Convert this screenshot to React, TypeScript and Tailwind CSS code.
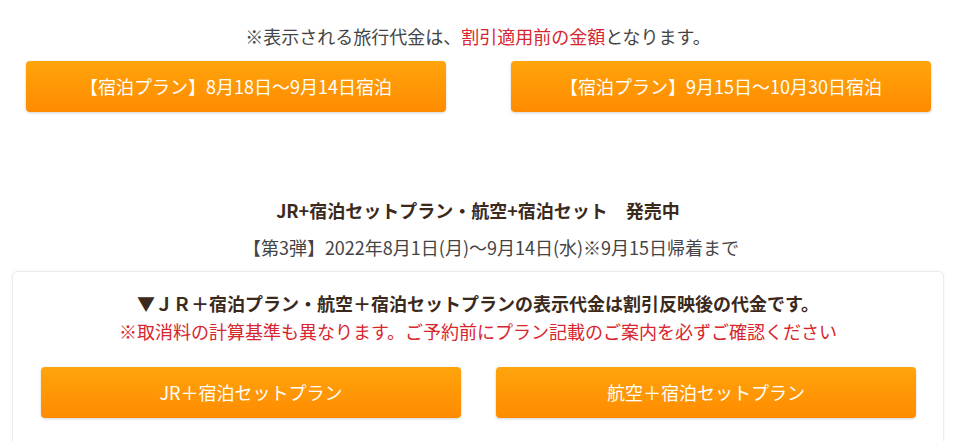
import React from "react";

const font = { fontFamily: '"Noto Sans CJK JP", "Noto Sans", sans-serif' };

function OButton({ children, className = "" }: { children: React.ReactNode; className?: string }) {
  return (
    <a
      className={
        "flex h-[51px] w-[420px] items-center justify-center rounded-[4px] bg-gradient-to-b from-[#ffa40c] to-[#ff8b00] text-[18px] text-white shadow-[0_1px_3px_rgba(0,0,0,0.18)] " +
        className
      }
    >
      {children}
    </a>
  );
}

export default function App() {
  return (
    <div className="h-[441px] w-[956px] overflow-hidden bg-white" style={font}>
      <div className="flex h-[61px] items-end justify-center pb-[12px] text-[18px] leading-[26px] text-[#444]">
        <p>
          ※表示される旅行代金は、<span className="text-[#d8262e]">割引適用前の金額</span>となります。
        </p>
      </div>
      <div className="flex gap-[65px] pl-[26px]">
        <OButton>【宿泊プラン】8月18日～9月14日宿泊</OButton>
        <OButton>【宿泊プラン】9月15日～10月30日宿泊</OButton>
      </div>
      <div className="mt-[85px] flex flex-col items-center">
        <p className="text-[18px] font-bold leading-[26px] text-[#3b2a1c]">
          JR+宿泊セットプラン・航空+宿泊セット　発売中
        </p>
        <p className="mt-[11px] pl-[26px] text-[18px] leading-[26px] text-[#444]">
          【第3弾】2022年8月1日(月)～9月14日(水)※9月15日帰着まで
        </p>
      </div>
      <div className="ml-[12px] mt-[11px] w-[932px] rounded-[6px] border border-[#ececec] bg-white pt-[17px] shadow-[0_0_3px_rgba(0,0,0,0.06)]">
        <p className="text-center text-[18px] font-bold leading-[28px] text-[#3b2a1c]">
          ▼ＪＲ＋宿泊プラン・航空＋宿泊セットプランの表示代金は割引反映後の代金です。
        </p>
        <p className="text-center text-[18px] leading-[28px] text-[#d8262e]">
          ※取消料の計算基準も異なります。ご予約前にプラン記載のご案内を必ずご確認ください
        </p>
        <div className="mt-[22px] flex gap-[35px] pb-[30px] pl-[28px]">
          <OButton>JR＋宿泊セットプラン</OButton>
          <OButton>航空＋宿泊セットプラン</OButton>
        </div>
      </div>
    </div>
  );
}
